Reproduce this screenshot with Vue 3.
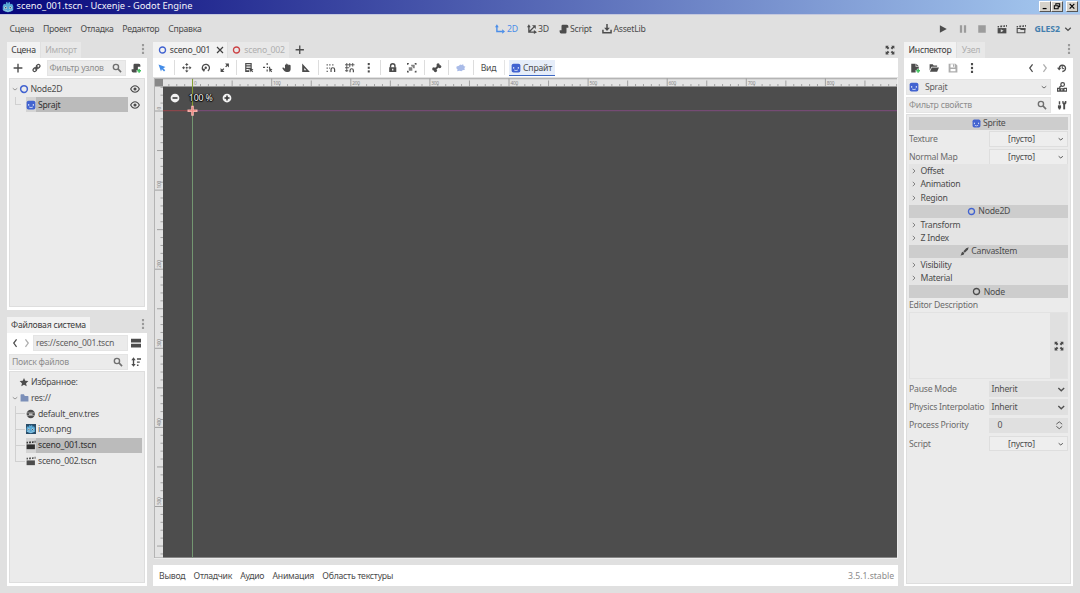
<script setup>
import { h } from 'vue'

const shapes = {
  ring: '<circle cx="8" cy="8" r="5.4" fill="none" stroke="currentColor" stroke-width="2.4"/>',
  plus: '<path d="M8 1v14M1 8h14" stroke="currentColor" stroke-width="2.2" fill="none"/>',
  close: '<path d="M2 2l12 12M14 2l-12 12" stroke="currentColor" stroke-width="2.4" fill="none"/>',
  link: '<g fill="none" stroke="currentColor" stroke-width="2.2" stroke-linecap="round"><rect x="7.5" y="2.2" width="7" height="5.4" rx="2.6" transform="rotate(-45 11 5)"/><rect x="1.5" y="8.4" width="7" height="5.4" rx="2.6" transform="rotate(-45 5 11)"/><path d="M6 10l4-4"/></g>',
  search: '<circle cx="6.3" cy="6.3" r="4.2" fill="none" stroke="currentColor" stroke-width="2.2"/><path d="M9.5 9.5l5 5" stroke="currentColor" stroke-width="2.6"/>',
  dots: '<rect x="6.3" y="0" width="3.4" height="3.6"/><rect x="6.3" y="6.2" width="3.4" height="3.6"/><rect x="6.3" y="12.4" width="3.4" height="3.6"/>',
  scriptAdd: '<path d="M6 1a2 2 0 0 0-2 2v7H1v2.5A2.5 2.5 0 0 0 3.500 15H9V11h2V6h4V3.500A2.500 2.500 0 0 0 12.500 1z"/><path d="M13 9.500v6M10 12.500h6" stroke="#3fc35e" stroke-width="2.4"/>',
  fileAdd: '<path d="M2 1h7v5h5v3h-3v2H9v4H2z"/><path d="M10 1l4 4h-4z"/><path d="M13 9.500v6M10 12.500h6" stroke="#3fc35e" stroke-width="2.4"/>',
  script: '<path d="M6 1a2 2 0 0 0-2 2v7H1v2.500A2.500 2.500 0 0 0 3.500 15H10a2 2 0 0 0 2-2V6h3V3.500A2.500 2.500 0 0 0 12.500 1z"/>',
  eye: '<path d="M1 8c3.500-7 10.500-7 14 0c-3.500 7-10.500 7-14 0z" fill="none" stroke="currentColor" stroke-width="1.700"/><circle cx="8" cy="8" r="2.500"/>',
  sprite: '<path fill-rule="evenodd" d="M4 1h8a3 3 0 0 1 3 3v8a3 3 0 0 1-3 3H4a3 3 0 0 1-3-3V4a3 3 0 0 1 3-3z"/><path d="M4.300 6.500v2.600M11.700 6.500v2.600" stroke="#dfe5f8" stroke-width="1.700"/><path d="M5 11.300q3 1.600 6 0" fill="none" stroke="#dfe5f8" stroke-width="1.300"/>',
  down: '<path d="M2.500 5.500l5.500 5.200l5.500-5.200" fill="none" stroke="currentColor" stroke-width="2.600"/>',
  thinDown: '<path d="M3.500 6.500L8 10l4.500-3.500" fill="none" stroke="currentColor" stroke-width="2"/>',
  left: '<path d="M10.500 2L6 8l4.500 6" fill="none" stroke="currentColor" stroke-width="2"/>',
  right: '<path d="M5.500 2L10 8L5.500 14" fill="none" stroke="currentColor" stroke-width="2"/>',
  smallRight: '<path d="M6 4.500L9.500 8L6 11.500" fill="none" stroke="#777" stroke-width="1.500"/>',
  axes2d: '<path d="M3 3v9h9" fill="none" stroke="currentColor" stroke-width="2.200"/><path d="M0 5l3-4.500L6 5zM11.500 8.500L16 12l-4.500 3.500z"/>',
  axes3d: '<path d="M3 3v10h9M4 12l7-7" fill="none" stroke="currentColor" stroke-width="2.200"/><path d="M0 5l3-4.500L6 5zM11 9.500l5 3.500l-5 3zM8 2h6v6z"/>',
  asset: '<path d="M8 0v7M1.500 9v5h13V9" fill="none" stroke="currentColor" stroke-width="2.400"/><path d="M3.500 6h9L8 11z"/>',
  play: '<path d="M3 2l11 6L3 14z"/>',
  pause: '<path d="M3 2h3.600v12H3zM9.400 2H13v12H9.400z"/>',
  stop: '<path d="M2 2h12v12H2z"/>',
  clapPlay: '<path d="M1 6.500h14V15H1z"/><path d="M1 3h2.500L3 5.500H1zM5.500 2.500h3L8 5.200H5zM10.500 2H13l-.5 2.800H10zM14.500 1.500H16v3h-1.500z"/><path d="M6 8.200l4.500 2.500L6 13.200z" fill="#e0e0e0"/>',
  clapOpen: '<path d="M1.900 7.200h12.200V14H1.900z" fill="none" stroke="currentColor" stroke-width="1.800"/><path d="M1 3h2.500L3 5.500H1zM5.500 2.500h3L8 5.200H5zM10.500 2H13l-.5 2.800H10zM14.500 1.500H16v3h-1.500zM7 6.500h8v3H7z"/>',
  scene: '<path d="M1 7h14v8H1z"/><path d="M1 2.500h2.500L3 5.500H1zM5.500 2h3L8 5h-3zM10.500 1.500H13L12.500 4.500H10zM14.500 1H16v3h-1.500z"/>',
  expand: '<path d="M1 1h5L4.700 2.300L7 4.600L4.600 7L2.300 4.700L1 6z"/><path d="M15 1h-5l1.300 1.300L9 4.600L11.400 7l2.300-2.300L15 6z"/><path d="M1 15h5l-1.300-1.300L7 11.400L4.600 9l-2.300 2.300L1 10z"/><path d="M15 15h-5l1.300-1.300L9 11.400L11.400 9l2.300 2.300L15 10z"/>',
  select: '<path d="M1 1l14 5l-4.600 2.400L14.500 12.500L12 15l-4.200-4.300L6 15z"/>',
  move: '<path d="M8 0l3 3.500H5zM8 16l3-3.500H5zM0 8l3.500-3v6zM16 8l-3.500-3v6z"/><circle cx="8" cy="8" r="1.800"/><path d="M8 3v2M8 11v2M3 8h2M11 8h2" stroke="currentColor" stroke-width="1.600"/>',
  rotate: '<path d="M3.600 12A6 6 0 1 1 11.500 13.200" fill="none" stroke="currentColor" stroke-width="2.200"/><path d="M1 9.500h6.500L5 15z"/><circle cx="8" cy="8" r="2"/>',
  scale: '<path d="M8.500 1H15v6.500zM1 8.500V15h6.500z"/><path d="M3 13l3.500-3.500M9.500 6.500L13 3" stroke="currentColor" stroke-width="2.200"/>',
  list: '<path fill-rule="evenodd" d="M2 0h11v10H9v5H2zM4 2v1.800h7V2zM4 6v1.800h7V6zM4 10v2h4v-2z"/><path d="M9 8l7 2.800l-2.600 1.200L15.500 14L14 15.500l-2-2L11 16z"/>',
  pivot: '<path d="M7 0v3.500M7 11v3.500M0 7.500h3.500M10 7.500h2" stroke="currentColor" stroke-width="2"/><path d="M6.500 6.500h2v2h-2zM10 8l6 2.800l-2.600 1.200L15.500 14L14 15.500l-2-2L11 16z"/>',
  hand: '<path d="M5 8V3.500a1 1 0 0 1 2 0V2a1 1 0 0 1 2 0v1a1 1 0 0 1 2 0v1.500a1.200 1.200 0 0 1 3.500 0V11a4 4 0 0 1-4 4H8C5 15 4 13 1 9.500a1.200 1.200 0 0 1 2-1.500l2 1.500z"/>',
  triangle: '<path fill-rule="evenodd" d="M2 1v14h13zM5.500 8.500l3.500 3.500H5.500z"/>',
  snap: '<path d="M8.500 15V11a3 3 0 0 1 6 0v4" fill="none" stroke="currentColor" stroke-width="2"/><path d="M1 2h2v2H1zM5.500 2h2v2h-2zM10.500 2h2v2h-2zM1 7.500h2v2H1zM1 13h2v2H1zM5.500 7.500h1.500v2H5.500z"/>',
  grid: '<path d="M3 0v15M8 0v7M13 0v6M0 3h16M0 8h7M0 13h5.500" stroke="currentColor" stroke-width="1.500"/><path d="M8.500 15.500v-3a2.800 2.800 0 0 1 5.600 0v3" fill="none" stroke="currentColor" stroke-width="2"/>',
  lock: '<path d="M4.300 8V5a3.700 3.700 0 0 1 7.400 0v3" fill="none" stroke="currentColor" stroke-width="2.300"/><path fill-rule="evenodd" d="M2 7h12v8H2zM7 9.500v3h2v-3z"/>',
  group: '<path d="M0 0h3v2H2v1H0zM13 0h3v3h-2V2h-1zM0 13h2v1h1v2H0zM14 13h2v3h-3v-2h1z"/><path d="M7 3h6v6h-2.500A3.500 3.500 0 0 0 7 5.500zM3 7h6v6H3z" opacity=".7"/>',
  bone: '<path d="M4.500 11.500l7-7" stroke="currentColor" stroke-width="3.600"/><circle cx="10.300" cy="3.300" r="2.700"/><circle cx="13" cy="6" r="2.700"/><circle cx="3" cy="10" r="2.700"/><circle cx="5.800" cy="12.800" r="2.700"/>',
  cloud: '<path d="M1 6l4-1.500L7 2.500l2 1l3-1.500l1 3l3 1.500l-2 2l1 3l-4 .5l-2 2l-3-1l-4 1l.5-3.500l-2-1.500z"/>',
  folderOpen: '<path d="M1 2h5l1.500 2H13v2H4L1 12z"/><path d="M4.500 7H16l-3 7H1.500z"/>',
  save: '<path fill-rule="evenodd" d="M1 1h11l3 3v11H1zM4 2v5h7V2zM4 9.500V13h8V9.500z"/><path d="M8 2h2v4H8z"/>',
  history: '<path d="M3.600 9A5 5 0 1 1 8.500 13.600" fill="none" stroke="currentColor" stroke-width="2.200"/><path d="M0 7.500h7L3.500 12z"/><path d="M8.500 5v4h3" fill="none" stroke="currentColor" stroke-width="1.600"/>',
  doc: '<circle cx="9" cy="4" r="2.900" fill="none" stroke="currentColor" stroke-width="2"/><path d="M7 6L3.500 9" stroke="currentColor" stroke-width="2.200"/><path fill-rule="evenodd" d="M0 9h4l1.500 1H10l1.500-1H16v6.500H0zM2 11v2.500h1.500V11zM7 11v2.500h1.500V11zM12 11v2.500h2.500V11z"/>',
  tools: '<path d="M4 2v5M4 10v5" stroke="currentColor" stroke-width="2.300"/><path d="M1.500 8.500h5v5h-5z"/><path d="M11.500 5v10" stroke="currentColor" stroke-width="3"/><path d="M8.500 1.500h2V4h2V1.500h2.500V5L13 7h-3L8.500 5z"/>',
  split: '<path d="M0 1h16v6H0zM0 9h16v6H0z"/>',
  sort: '<path d="M4 3v10" stroke="currentColor" stroke-width="2.200"/><path d="M.5 5L4 .5L7.500 5zM.5 11L4 15.500L7.500 11zM9.500 2H16v2.200H9.500zM9.500 7H14v2.200H9.500zM9.500 12H12v2.200H9.500z"/>',
  star: '<path d="M8 1.500l2 4.500l5 .5l-3.700 3.400l1 4.900L8 12.300l-4.300 2.500l1-4.900L1 6.500L6 6z"/>',
  folder: '<path d="M1 2.500a1 1 0 0 1 1-1h5l1.500 3H14a1 1 0 0 1 1 1V14H1z"/>',
  globe: '<circle cx="8" cy="8" r="7"/><path d="M1.500 6h13M1.500 10.500h13" stroke="#cfcfcf" stroke-width=".9"/><path d="M5 7h6v2.800H5z" fill="#c4c4c4"/>',
  godot: '<path d="M1 6.500l1.500-3L5 4.300L5.500 1.500L7.200 1v2h1.600V1l1.700.5L11 4.300l2.500-.8l1.500 3V12q-7 6-14 0z" fill="#58a8d4"/><circle cx="4.800" cy="9" r="1.700" fill="#e9f3f7"/><circle cx="11.200" cy="9" r="1.700" fill="#e9f3f7"/><circle cx="4.900" cy="9" r="1.100" fill="#354754"/><circle cx="11.100" cy="9" r="1.100" fill="#354754"/><path d="M1.500 12l5 .7v1h3v-1l5-.7" stroke="#d7eaf3" fill="none" stroke-width=".6"/>',
  brush: '<path d="M15.500.500L14 5L8.500 10L6 7.500L11 2z"/><path d="M5.200 8.500l2.400 2.400Q7 15 .5 15.200Q2.500 13 2.500 11Q3 8.700 5.200 8.500z"/>',
  spin: '<path d="M2.500 6L8 1.500L13.500 6M2.500 10L8 14.500L13.500 10" fill="none" stroke="currentColor" stroke-width="1.700"/>',
  minusDisc: '<circle cx="8" cy="8" r="7" fill="#f2f2f2"/><path d="M4 8h8" stroke="#333" stroke-width="2.400"/>',
  plusDisc: '<circle cx="8" cy="8" r="7" fill="#f2f2f2"/><path d="M4 8h8M8 4v8" stroke="#333" stroke-width="2.400"/>'
}

const Icon = (props) =>
  h('svg', { viewBox: '0 0 16 16', class: 'icon', fill: 'currentColor', innerHTML: shapes[props.name] })
Icon.props = ['name']

const menus = ['Сцена', 'Проект', 'Отладка', 'Редактор', 'Справка']
const modes = [
  { icon: 'axes2d', label: '2D', cls: 'm2' },
  { icon: 'axes3d', label: '3D', cls: 'm3' },
  { icon: 'script', label: 'Script', cls: 'ms' },
  { icon: 'asset', label: 'AssetLib', cls: 'ma' }
]
const tools = [
  ['select'], ['move', 'rotate', 'scale'], ['list', 'pivot', 'hand', 'triangle'],
  ['snap', 'grid', 'dots'], ['lock', 'group'], ['bone'], ['cloud']
]
const files = [
  { icon: 'globe', name: 'default_env.tres' },
  { icon: 'godot', name: 'icon.png' },
  { icon: 'scene', name: 'sceno_001.tscn' },
  { icon: 'scene', name: 'sceno_002.tscn' }
]
const bottom = ['Вывод', 'Отладчик', 'Аудио', 'Анимация', 'Область текстуры']

const step = 7.91
function ticks(from, to) {
  const out = []
  for (let i = from; i <= to; i++) out.push({ i, at: i * step, len: i % 10 === 0 ? 8 : i % 5 === 0 ? 6 : 2.5 })
  return out
}
const hTicks = ticks(-3, 89)
const vTicks = ticks(-3, 56)
</script>

<template>
  <div class="window">
    <header class="title">
      <Icon name="godot" class="logo" />
      <span class="caption">sceno_001.tscn - Ucxenje - Godot Engine</span>
      <div class="winbtns">
        <span class="wb"><svg viewBox="0 0 12 11"><path d="M3 8.500h5" stroke="#000" stroke-width="1.600" /></svg></span>
        <span class="wb"><svg viewBox="0 0 12 11"><path d="M4.500 4V2.200h5v4H8M2.500 4.700h5v4h-5z" stroke="#000" stroke-width="1.300" fill="none" /></svg></span>
        <span class="wb last"><svg viewBox="0 0 12 11"><path d="M3 2.500l6 6M9 2.500l-6 6" stroke="#000" stroke-width="1.500" /></svg></span>
      </div>
    </header>

    <nav class="menubar">
      <div class="menus"><span v-for="m in menus" :key="m">{{ m }}</span></div>
      <div class="modes">
        <span v-for="m in modes" :key="m.label" :class="['mode', m.cls]"><Icon :name="m.icon" />{{ m.label }}</span>
      </div>
      <div class="run">
        <Icon name="play" /><Icon name="pause" class="dim" /><Icon name="stop" class="dim" />
        <Icon name="clapPlay" class="clap" /><Icon name="clapOpen" />
        <b>GLES2</b><Icon name="down" class="gldown" />
      </div>
    </nav>

    <main class="body">
      <aside class="leftcol">
        <div class="tabs"><span class="tab on w-scene">Сцена</span><span class="tab w-import">Импорт</span><Icon name="dots" class="more" /></div>
        <section class="dock scenedock">
          <div class="bar scenebar">
            <Icon name="plus" class="i-plus" /><Icon name="link" class="i-link" />
            <div class="field f-nodes"><span>Фильтр узлов</span><Icon name="search" /></div>
            <Icon name="scriptAdd" class="i-end" />
          </div>
          <div class="tree scenetree">
            <div class="node root"><Icon name="thinDown" class="arrow" /><Icon name="ring" class="blue" /><span>Node2D</span><Icon name="eye" class="eye" /></div>
            <div class="node child"><i class="elbow"></i><div class="sel"><em><Icon name="sprite" class="blue" /></em><span>Sprajt</span></div><Icon name="eye" class="eye" /></div>
          </div>
        </section>
        <div class="tabs fstabs"><span class="tab on w-fs">Файловая система</span><Icon name="dots" class="more" /></div>
        <section class="dock fsdock">
          <div class="bar pathbar">
            <Icon name="left" /><Icon name="right" class="dim" />
            <div class="field f-path"><span>res://sceno_001.tscn</span></div>
            <Icon name="split" class="i-split" />
          </div>
          <div class="bar searchbar">
            <div class="field f-files"><span>Поиск файлов</span><Icon name="search" /></div>
            <Icon name="sort" class="i-sort" />
          </div>
          <div class="tree fstree">
            <div class="frow fav"><Icon name="star" /><span>Избранное:</span></div>
            <div class="frow res"><Icon name="thinDown" class="arrow" /><Icon name="folder" class="folder" /><span>res://</span></div>
            <div class="files">
              <div v-for="(f, i) in files" :key="f.name" :class="['frow', 'file', { picked: i === 2 }]">
                <i class="branch"></i>
                <div class="cell"><em><Icon :name="f.icon" :class="{ pic: f.icon === 'godot' }" /></em><span>{{ f.name }}</span></div>
              </div>
            </div>
          </div>
        </section>
      </aside>

      <section class="center">
        <div class="tabs">
          <span class="tab on scenetab"><Icon name="ring" class="blue" />sceno_001<Icon name="close" class="x" /></span>
          <span class="tab scenetab2"><Icon name="ring" class="red" />sceno_002</span>
          <Icon name="plus" class="newtab" /><Icon name="expand" class="full" />
        </div>
        <div class="toolbar">
          <div v-for="(g, i) in tools" :key="i" :class="['group', 'g' + i]"><span v-for="t in g" :key="t" class="tool"><Icon :name="t" /></span></div>
          <span class="view">Вид</span>
          <span class="spritebtn"><Icon name="sprite" class="blue" />Спрайт</span>
        </div>
        <div class="viewport">
          <svg class="canvas" viewBox="154 78 744 481">
            <rect x="154" y="78" width="744" height="481" fill="#ececec" />
            <rect x="154" y="78" width="743" height="480" fill="#b4b4b4" />
            <rect x="155" y="79.300" width="742" height="478" fill="#e3e3e3" />
            <rect x="155" y="79" width="8" height="7.500" fill="#888" />
            <rect x="163" y="86.500" width="734" height="471" fill="#4d4d4d" />
            <g stroke="#909090" stroke-width=".8">
              <line v-for="t in hTicks" :key="'h' + t.i" :x1="192.600 + t.at" :x2="192.600 + t.at" :y1="86.500 - t.len" y2="86.500" />
              <line v-for="t in vTicks" :key="'v' + t.i" :y1="111 + t.at" :y2="111 + t.at" :x1="163 - t.len" x2="163" />
            </g>
            <g class="num">
              <text v-for="n in 9" :key="'a' + n" :x="194 + (n - 1) * 79.100" y="84.700">{{ (n - 1) * 100 }}</text>
              <text v-for="n in 6" :key="'b' + n" :transform="`translate(161 ${109.500 + (n - 1) * 79.100}) rotate(-90)`">{{ (n - 1) * 100 }}</text>
            </g>
            <path d="M163 110.700h29.500" stroke="#98464c" stroke-width="1" />
            <path d="M192.500 110.700H897" stroke="#7f4c7e" stroke-width="1" />
            <path d="M192.500 79v31" stroke="#84a032" stroke-width="1" />
            <path d="M192.500 111v446.500" stroke="#739671" stroke-width="1" />
            <path d="M192.500 105.700v10M187.500 110.700h10" stroke="#f8b4ae" stroke-width="2.600" />
            <path d="M192.500 107v7.500M188.800 110.700h7.400" stroke="#ef8d86" stroke-width="1" />
          </svg>
          <div class="zoom"><Icon name="minusDisc" /><span>100 %</span><Icon name="plusDisc" /></div>
        </div>
        <footer class="bottombar"><span v-for="b in bottom" :key="b">{{ b }}</span><span class="version">3.5.1.stable</span></footer>
      </section>

      <aside class="rightcol">
        <div class="tabs"><span class="tab on w-insp">Инспектор</span><span class="tab w-node">Узел</span><Icon name="dots" class="more" /></div>
        <section class="dock inspdock">
          <div class="bar inspbar">
            <Icon name="fileAdd" /><Icon name="folderOpen" /><Icon name="save" class="dim" /><Icon name="dots" />
            <Icon name="left" class="prev" /><Icon name="right" class="dim next" /><Icon name="history" class="hist" />
          </div>
          <div class="bar objbar">
            <div class="field f-obj"><Icon name="sprite" class="blue" /><span>Sprajt</span><Icon name="thinDown" class="end" /></div><Icon name="doc" class="i-side" />
          </div>
          <div class="bar propbar">
            <div class="field f-props"><span>Фильтр свойств</span><Icon name="search" /></div><Icon name="tools" class="i-side" />
          </div>
          <div class="props">
            <div class="cat"><Icon name="sprite" class="blue" />Sprite</div>
            <div class="prop tex"><label>Texture</label><div class="empty"><span>[пусто]</span><Icon name="thinDown" /></div></div>
            <div class="prop"><label>Normal Map</label><div class="empty"><span>[пусто]</span><Icon name="thinDown" /></div></div>
            <div class="secs first"><div v-for="s in ['Offset', 'Animation', 'Region']" :key="s" class="sec"><Icon name="smallRight" />{{ s }}</div></div>
            <div class="cat"><Icon name="ring" class="blue" />Node2D</div>
            <div class="secs"><div v-for="s in ['Transform', 'Z Index']" :key="s" class="sec"><Icon name="smallRight" />{{ s }}</div></div>
            <div class="cat"><Icon name="brush" />CanvasItem</div>
            <div class="secs"><div v-for="s in ['Visibility', 'Material']" :key="s" class="sec"><Icon name="smallRight" />{{ s }}</div></div>
            <div class="cat"><Icon name="ring" />Node</div>
            <div class="desc">Editor Description</div>
            <div class="area"><div class="text"></div><div class="grow"><Icon name="expand" /></div></div>
            <div class="prop"><label>Pause Mode</label><div class="pick"><span>Inherit</span><Icon name="down" /></div></div>
            <div class="prop"><label>Physics Interpolatio</label><div class="pick"><span>Inherit</span><Icon name="down" /></div></div>
            <div class="prop"><label>Process Priority</label><div class="pick number"><span>0</span><Icon name="spin" /></div></div>
            <div class="prop"><label>Script</label><div class="empty"><span>[пусто]</span><Icon name="thinDown" /></div></div>
          </div>
        </section>
      </aside>
    </main>
  </div>
</template>

<style>
html, body { margin: 0; overflow: hidden; }
</style>

<style scoped>
* { box-sizing: border-box; }
.window { width: 1080px; height: 593px; background: #e0e0e0; color: #4c4c4c; font: 8.7px/12px "Noto Sans", sans-serif; letter-spacing: -.25px; display: flex; flex-direction: column; white-space: nowrap; overflow: hidden; }
.icon { width: 10px; height: 10px; flex: none; display: block; overflow: visible; }
.blue { color: #4263d0; }
.red { color: #cc4345; }
.dim { opacity: .45; }
em, i { font-style: normal; }
.title { height: 14px; flex: none; display: flex; align-items: center; background: linear-gradient(90deg, #07077c, #a6caf0); box-shadow: 0 1px 0 #c4c8de; color: #f4f4fb; letter-spacing: 0; }
.logo { width: 12px; height: 12px; margin-left: 2px; }
.caption { font-size: 9.3px; margin-left: 2.500px; margin-top: -2px; }
.winbtns { margin-left: auto; display: flex; padding-right: 2px; margin-top: -1px; }
.wb { width: 12px; height: 10.500px; background: #d6d2ca; border: 1px solid; border-color: #fff #555 #555 #fff; display: flex; }
.wb svg { width: 100%; height: 100%; }
.wb.last { margin-left: 3px; }

.menubar { height: 28px; flex: none; display: flex; align-items: center; padding-top: 1px; }
.menus { display: flex; gap: 8.800px; padding-left: 9.500px; width: 495px; }
.modes { display: flex; width: 443px; }
.mode { display: flex; align-items: center; gap: 2px; }
.m2 { color: #4a8de8; width: 32px; }
.m3 { width: 31.500px; gap: 1px; }
.ms { width: 43px; gap: 1.500px; }
.run { display: flex; align-items: center; gap: 9.500px; }
.run b { color: #447fae; margin-left: -1px; letter-spacing: -.05px; font-size: 8.700px; }
.run .gldown { width: 8px; height: 8px; margin-left: -6px; }

.body { flex: 1; min-height: 0; display: grid; grid-template-columns: 140px 745px 169px; column-gap: 6px; padding-left: 7px; }
.tabs { height: 16px; display: flex; align-items: stretch; flex: none; gap: 1px; }
.tab { display: flex; align-items: center; justify-content: center; background: #e8e8e8; color: #afafaf; padding-bottom: 1px; }
.tab.on { background: #f2f2f2; color: #404040; }
.w-scene { width: 33px; }
.w-import { width: 40px; }
.w-fs { width: 83px; }
.w-insp { width: 52px; }
.w-node { width: 28px; }
.more { margin: 2px -1px 0 auto; color: #9a9a9a; }
.leftcol, .rightcol, .center { display: flex; flex-direction: column; min-width: 0; }
.dock { background: #fff; flex: none; padding: 0 2px; display: flex; flex-direction: column; }
.scenedock { height: 252px; }
.fstabs { margin-top: 7px; }
.fsdock { height: 253px; }
.bar { display: flex; align-items: center; flex: none; }
.field { background: #ebebeb; border: 1px solid #e4e4e4; height: 16px; display: flex; align-items: center; color: #8e8e8e; padding: 0 2px; flex: none; }
.field > .icon:last-child { margin-left: auto; margin-right: 2px; color: #707070; }
.f-props > .icon:last-child, .f-obj > .icon:last-child { margin-right: 1px; }
.scenebar { height: 20px; }
.i-plus { margin-left: 4px; }
.i-link { margin-left: 8.500px; width: 9px; }
.f-nodes { margin-left: 6px; width: 79px; }
.f-nodes > .icon:last-child { margin-right: 1px; }
.i-end { margin-left: 5px; }
.tree { background: #ebebeb; border: 1px solid #dedede; }
.scenetree { height: 229px; padding-top: 1.500px; }
.node { height: 16px; display: flex; align-items: center; }
.arrow { width: 8px; height: 8px; color: #999; }
.root { padding-left: 1px; }
.root span { margin-left: 1.500px; }
.eye { margin-left: auto; margin-right: 4px; }
.elbow { width: 6px; height: 8px; margin: -8px 0 0 5px; border-left: 1px solid #d0d0d0; border-bottom: 1px solid #d0d0d0; }
.sel { width: 102px; height: 15.500px; background: #bbb; margin-left: 5px; display: flex; align-items: center; color: #303030; }
.sel em, .cell em { width: 10px; height: 100%; display: flex; align-items: center; }
.sel em { background: #d4d4d4; }
.sel span, .cell span { margin-left: 2px; }
.pathbar { height: 19.500px; }
.pathbar .icon:first-child { margin-left: 1px; }
.pathbar .icon:nth-child(2) { margin-left: 2px; }
.f-path { width: 95px; margin-left: 1px; color: #606060; }
.pathbar .i-split { margin-left: 3px; }
.searchbar { height: 18px; }
.f-files { width: 119px; }
.i-sort { margin-left: 3px; }
.fstree { height: 212.500px; padding-top: 2.500px; }
.frow { height: 15.850px; display: flex; align-items: center; }
.fav { padding-left: 9px; gap: 2px; }
.res { padding-left: 1px; }
.res .folder { color: #7b8fb8; width: 9px; margin: 0 2px 0 1px; }
.files { margin-left: 5px; }
.branch { align-self: stretch; width: 11px; border-left: 1px solid #d0d0d0; background: linear-gradient(#d0d0d0, #d0d0d0) 0 50% / 9px 1px no-repeat; }
.file:last-child .branch { height: 8.500px; align-self: flex-start; background-position: 0 100%; }
.cell { width: 116px; height: 15.500px; display: flex; align-items: center; }
.cell em .icon { width: 9.500px; }
.picked .cell { background: #bbb; color: #303030; }
.picked em { background: #d4d4d4; }
.pic { background: #294c68; }

.scenetab { width: 74px; padding: 0 2px 0 4px; }
.scenetab .icon:first-child, .scenetab2 .icon { margin-right: 3px; width: 9px; }
.scenetab .x { width: 8px; height: 8px; margin-left: 6px; }
.scenetab2 { width: 61px; }
.newtab { margin: 2.500px 0 0 5px; width: 9.500px; height: 9.500px; }
.full { margin: 2.500px 3px 0 auto; }
.toolbar { height: 19px; background: #fff; display: flex; align-items: center; flex: none; }
.group { height: 15px; display: flex; border-right: 1px solid #ddd; align-items: center; justify-content: center; }
.group .icon { width: 9.500px; height: 9.500px; }
.tool { width: 19px; display: flex; justify-content: center; }
.g0 { width: 22px; padding-right: 4px; color: #438ce8; }
.g0 .icon { width: 8px; height: 8px; }
.g1 { width: 62px; }
.g2 { width: 82px; }
.g3 { width: 61.500px; }
.g4 { width: 44.500px; }
.g5 { width: 23.500px; }
.g6 { width: 25px; color: #a9bbe8; }
.view { width: 31px; height: 15px; border-right: 1px solid #e4e4e4; display: flex; align-items: center; justify-content: center; }
.spritebtn { width: 46px; height: 16.500px; margin-left: 4px; margin-top: 1px; display: flex; align-items: center; justify-content: center; gap: 2px; background: #e6edf9; border-bottom: 1.500px solid #3d68c4; }
.viewport { height: 482px; margin-left: 1px; position: relative; margin-top: 1px; flex: none; }
.canvas { display: block; width: 744px; height: 481px; }
.num { font: 4.800px "Noto Sans", sans-serif; fill: #888; }
.zoom { position: absolute; left: 16px; top: 14px; display: flex; align-items: center; color: #f4f4f4; text-shadow: 0 0 1px #000, 1px 0 1px #000, -1px 0 1px #000, 0 1px 1px #000; }
.zoom span { width: 41.500px; text-align: center; letter-spacing: -.1px; }
.bottombar { height: 21px; margin-top: 5px; background: #fff; display: flex; align-items: center; gap: 8.300px; padding: 0 4px 0 6px; flex: none; }
.version { margin-left: auto; color: #8b8b8b; letter-spacing: -.05px; }

.inspdock { height: 528px; }
.inspbar { height: 19.500px; padding-left: 4px; gap: 9px; }
.inspbar .prev { margin-left: auto; }
.inspbar .next { margin-left: -4.500px; }
.inspbar .hist { margin: 0 4px 0 -2px; }
.objbar { height: 18.500px; }
.propbar { height: 18px; }
.f-obj, .f-props { width: 145px; }
.f-obj { color: #606060; }
.f-obj span { margin-left: 6px; }
.f-obj > .icon.end { width: 8px; height: 8px; margin-right: 0; }
.i-side { margin-left: 6px; }
.props { height: 469.500px; width: 165px; background: #ebebeb; border: 1px solid #dedede; padding: 1.500px 2px 0 2px; }
.cat { width: 159px; height: 13.200px; background: #cdcdcd; display: flex; align-items: center; justify-content: center; gap: 2.500px; }
.cat .icon { width: 9px; height: 9px; }
.prop { height: 18.200px; display: flex; align-items: center; color: #6c6c6c; width: 159px; }
.prop label { width: 79.500px; overflow: hidden; }
.empty, .pick { width: 79px; height: 15.500px; display: flex; align-items: center; padding: 0 3px; color: #505050; }
.empty { border: 1px solid #dedede; background: #eee; }
.empty span { width: 58px; text-align: center; }
.empty .icon { margin-left: auto; width: 7.500px; margin-right: -1px; }
.pick { background: #e0e0e0; }
.pick .icon { margin-left: auto; width: 8.500px; height: 8.500px; margin-right: -1px; }
.pick.number span { margin-left: 6px; }
.pick.number .icon { margin-right: 1px; }
.secs { background: #e4e4e4; width: 159px; }
.secs.first { margin-top: -2px; position: relative; }
.sec { height: 13.500px; display: flex; align-items: center; gap: 1.500px; }
.desc { height: 14.300px; color: #6c6c6c; line-height: 14.300px; }
.area { width: 159px; height: 66.500px; border: 1px solid #e2e2e2; display: flex; margin-bottom: 1px; }
.text { flex: 1; }
.grow { width: 17px; background: #e0e0e0; display: flex; align-items: center; justify-content: center; }
</style>
